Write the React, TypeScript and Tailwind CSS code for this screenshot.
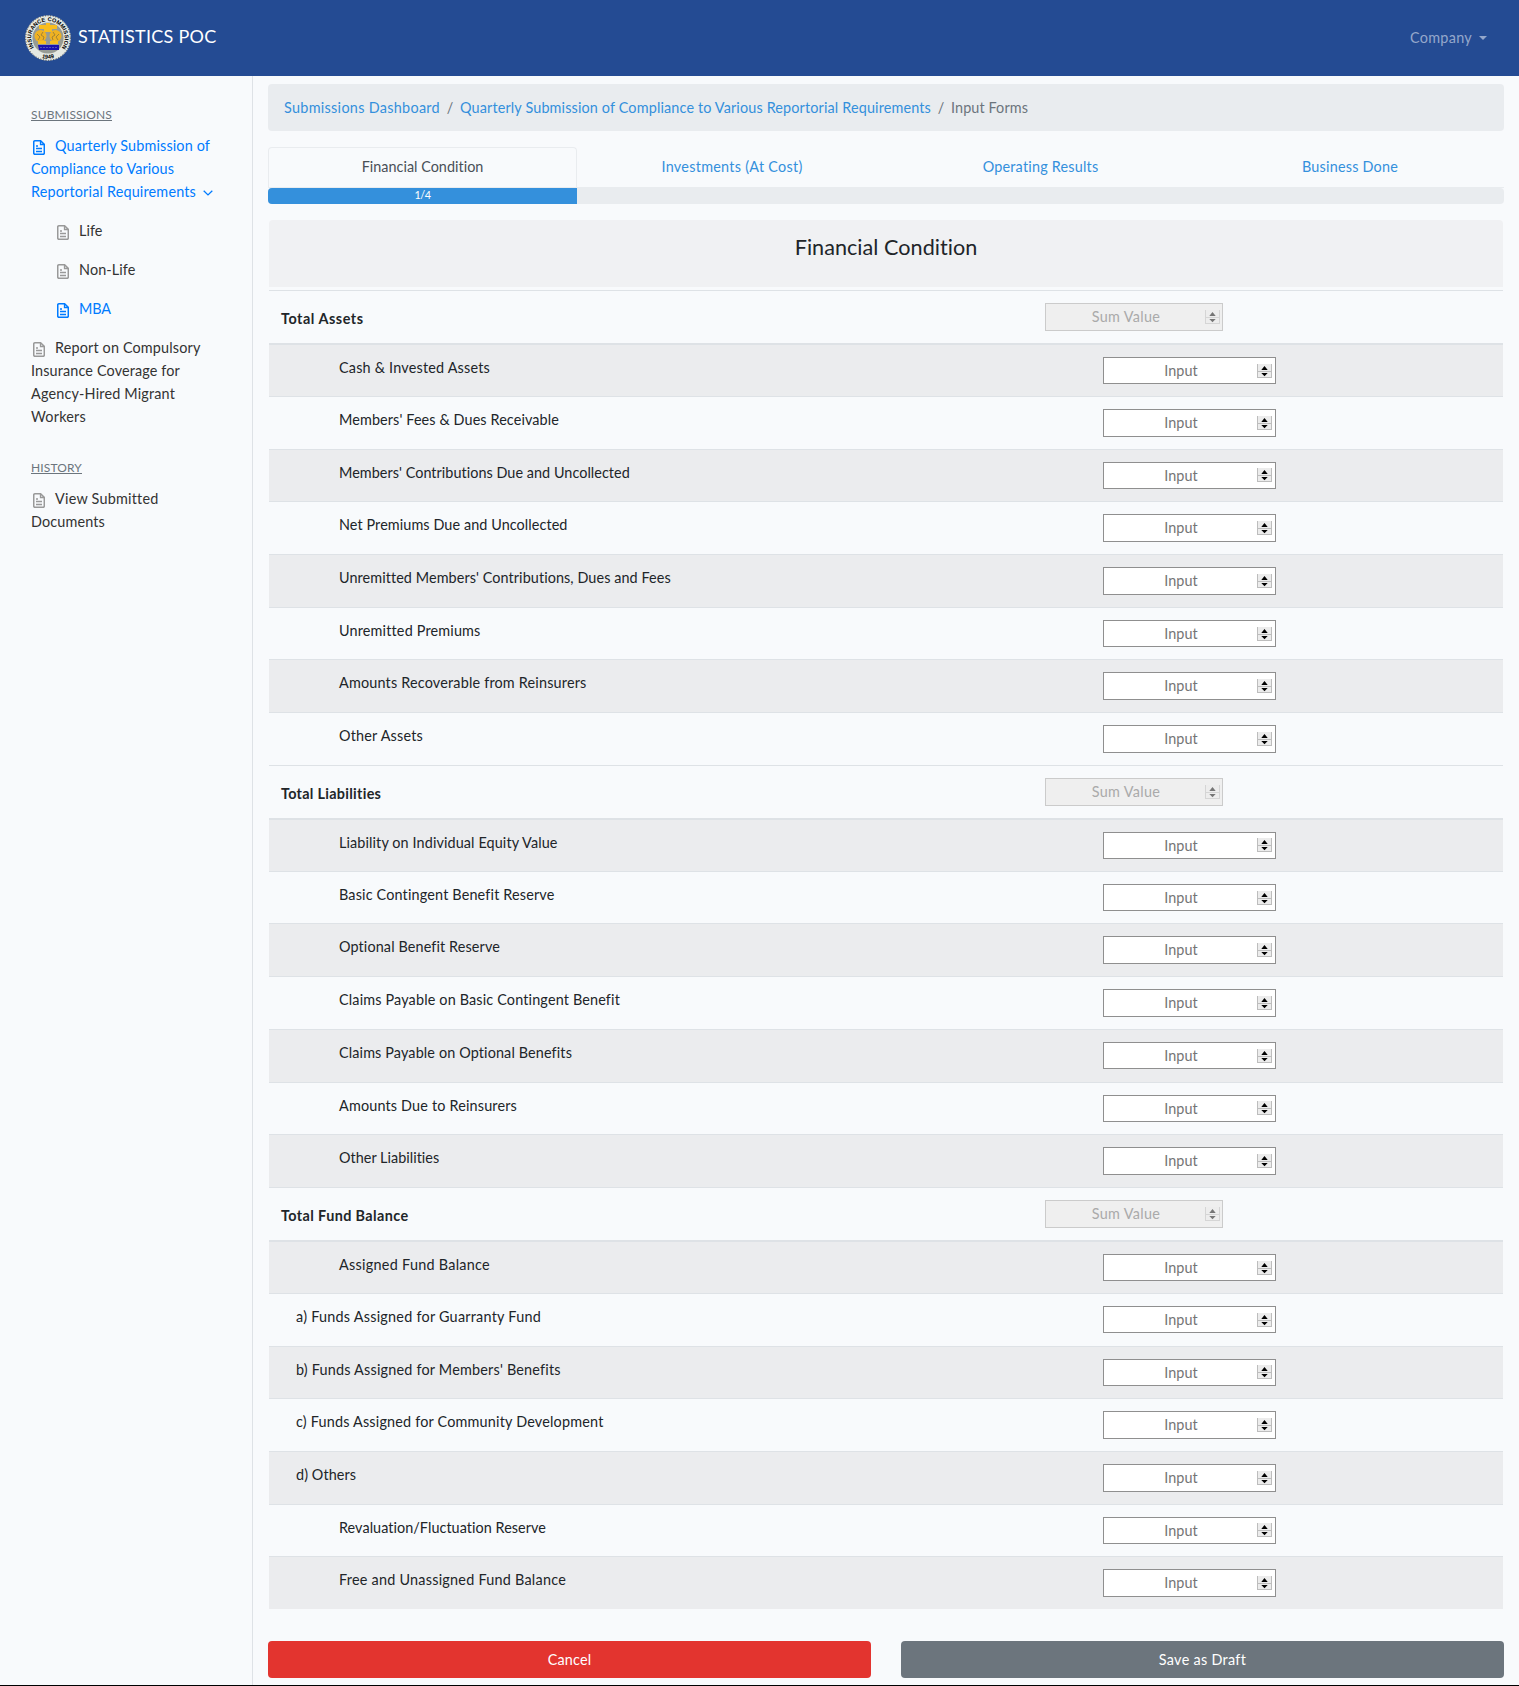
import React from "react";

type Row = { label: string; w: number; outdent?: boolean };
type Section = { title: string; w: number; rows: Row[] };

const sections: Section[] = [
  {
    title: "Total Assets",
    w: 82.5,
    rows: [
      { label: "Cash & Invested Assets", w: 151 },
      { label: "Members' Fees & Dues Receivable", w: 220 },
      { label: "Members' Contributions Due and Uncollected", w: 291 },
      { label: "Net Premiums Due and Uncollected", w: 228.5 },
      { label: "Unremitted Members' Contributions, Dues and Fees", w: 331.5 },
      { label: "Unremitted Premiums", w: 141 },
      { label: "Amounts Recoverable from Reinsurers", w: 247.5 },
      { label: "Other Assets", w: 84 },
    ],
  },
  {
    title: "Total Liabilities",
    w: 100.5,
    rows: [
      { label: "Liability on Individual Equity Value", w: 218.5 },
      { label: "Basic Contingent Benefit Reserve", w: 215.5 },
      { label: "Optional Benefit Reserve", w: 161 },
      { label: "Claims Payable on Basic Contingent Benefit", w: 281 },
      { label: "Claims Payable on Optional Benefits", w: 233 },
      { label: "Amounts Due to Reinsurers", w: 178 },
      { label: "Other Liabilities", w: 100.5 },
    ],
  },
  {
    title: "Total Fund Balance",
    w: 127.5,
    rows: [
      { label: "Assigned Fund Balance", w: 151 },
      { label: "a) Funds Assigned for Guarranty Fund", w: 245, outdent: true },
      { label: "b) Funds Assigned for Members' Benefits", w: 264.5, outdent: true },
      { label: "c) Funds Assigned for Community Development", w: 307.5, outdent: true },
      { label: "d) Others", w: 60, outdent: true },
      { label: "Revaluation/Fluctuation Reserve", w: 207.5 },
      { label: "Free and Unassigned Fund Balance", w: 227 },
    ],
  },
];

/** One line of text whose tracking is adjusted so that it spans `w` pixels. */
function Line({ children, w, className = "" }: { children: string; w: number; className?: string }) {
  const ref = React.useRef<HTMLSpanElement>(null);
  const [spacing, setSpacing] = React.useState(0);
  React.useLayoutEffect(() => {
    const el = ref.current;
    if (!el) return;
    el.style.letterSpacing = "0px";
    const natural = el.getBoundingClientRect().width;
    setSpacing((w - natural) / children.length);
    el.style.letterSpacing = `${(w - natural) / children.length}px`;
  }, [children, w]);
  return (
    <span ref={ref} className={`inline-block whitespace-nowrap ${className}`} style={{ letterSpacing: `${spacing}px` }}>
      {children}
    </span>
  );
}

function FileIcon({ className = "" }: { className?: string }) {
  return (
    <svg viewBox="0 0 12 15" className={`inline-block h-[15px] w-3 ${className}`} fill="none" stroke="currentColor">
      <path d="M2 .75h5.6L11.3 4.4V13a1.2 1.2 0 0 1-1.2 1.25H2A1.2 1.2 0 0 1 .75 13V2A1.2 1.2 0 0 1 2 .75Z" strokeWidth="1.5" />
      <path d="M7.5 1v3.5H11" strokeWidth="1.3" />
      <path d="M3 6h2M3 8.500h6M3 11.500h6" strokeWidth="1.3" />
    </svg>
  );
}

function Seal() {
  return (
    <svg viewBox="0 0 46 46" className="h-[46px] w-[46px]">
      <defs>
        <path id="rimTop" d="M9.700 33.300A16.800 16.800 0 1 1 36.300 33.300" />
        <path id="rimBottom" d="M10.500 39.600A20.800 20.800 0 0 0 35.500 39.600" />
      </defs>
      <circle cx="23" cy="23" r="22.8" fill="#e4e8e2" />
      <circle cx="23" cy="23" r="22.3" fill="none" stroke="#222" strokeWidth=".8" strokeDasharray="1 1.6" />
      <circle cx="23" cy="23" r="15.6" fill="#979b94" />
      <text fontSize="5.6" fontWeight="700" fill="#000" fontFamily="Liberation Sans, sans-serif">
        <textPath href="#rimTop" textLength="73" startOffset="1">INSURANCE COMMISSION</textPath>
      </text>
      <text fontSize="5.6" fontWeight="700" fill="#000" fontFamily="Liberation Sans, sans-serif">
        <textPath href="#rimBottom" startOffset="50%" textAnchor="middle">1949</textPath>
      </text>
      <path d="M14 10h7V8h4v2h7v4h-5v3h-8v-3h-5z" fill="#f9bd1d" />
      <circle cx="15.500" cy="21" r="6" fill="#efb222" />
      <circle cx="30.500" cy="21" r="6" fill="#efb222" />
      <path d="M13 26h8v3h-8zM25 26h8v3h-8z" fill="#f9bd1d" />
      <path d="M12 19l3 3-2 3M18 17l-2 3 3 2-1 3M34 19l-3 3 2 3M28 17l2 3-3 2 1 3" stroke="#9a7d35" strokeWidth=".9" fill="none" />
      <path d="M13 30h21v5H14z" fill="#1a12b0" />
      <path d="M15 32.500h17" stroke="#6a70b8" strokeWidth=".7" strokeDasharray="2 1" />
    </svg>
  );
}

function Spinner() {
  return (
    <svg viewBox="0 0 15 14" className="h-3.5 w-[15px]" shapeRendering="crispEdges">
      <path d="M0 0h15v14H0z" fill="#ececec" />
      <path d="M0 0h1v14H0zM14 0h1v14h-1zM0 13h15v1H0zM0 7h15v1H0z" fill="#bdbdbd" />
      <g shapeRendering="geometricPrecision" fill="#000">
        <path d="M7.500 2 10.700 6H4.300zM7.500 12.300 10.700 9H4.300z" />
      </g>
    </svg>
  );
}

function NumberBox({ sum }: { sum?: boolean }) {
  return sum ? (
    <div className="flex h-7 w-[178px] items-center border border-[#cbcbcb] bg-[#efefef] pr-0.5 text-[#aaaaaa]">
      <div className="flex-1 pl-px text-center"><Line w={68.5}>Sum Value</Line></div>
      <div className="flex opacity-50"><Spinner /></div>
    </div>
  ) : (
    <div className="flex h-[27.600px] w-[173px] items-center border border-[#8f8f8f] bg-white pr-[3px] text-[#757575]">
      <div className="flex-1 pl-px text-center"><Line w={33.5}>Input</Line></div>
      <Spinner />
    </div>
  );
}

function Sidebar() {
  return (
    <aside className="w-[253px] shrink-0 border-r border-[#dee2e6] pl-[31px] leading-[23px] text-[#333]">
      <h6 className="mt-[27px] text-[12px] text-[#6c757d]"><Line w={81} className="underline">SUBMISSIONS</Line></h6>
      <div className="mt-2 text-[#007bff]">
        <div className="flex items-center"><FileIcon className="mr-2.5 ml-0.5 mt-1" /><Line w={155}>Quarterly Submission of</Line></div>
        <div><Line w={143}>Compliance to Various</Line></div>
        <div className="flex items-center">
          <Line w={165}>Reportorial Requirements</Line>
          <svg viewBox="0 0 10 6" className="mt-0.5 ml-[7px] h-1.5 w-2.5" fill="none" stroke="currentColor" strokeWidth="1.3"><path d="M.7.7 5 4.900 9.300.7" /></svg>
        </div>
      </div>
      <div className="mt-4 ml-[26px] flex flex-col gap-4">
        <div className="flex items-center"><FileIcon className="mt-1 mr-2.5 text-[#999]" /><Line w={23.5}>Life</Line></div>
        <div className="flex items-center"><FileIcon className="mt-1 mr-2.5 text-[#999]" /><Line w={56.5}>Non-Life</Line></div>
        <div className="flex items-center text-[#007bff]"><FileIcon className="mt-1 mr-2.5" /><Line w={32}>MBA</Line></div>
      </div>
      <div className="mt-4">
        <div className="flex items-center"><FileIcon className="mt-1 mr-2.5 ml-0.5 text-[#999]" /><Line w={145.5}>Report on Compulsory</Line></div>
        <div><Line w={149}>Insurance Coverage for</Line></div>
        <div><Line w={144}>Agency-Hired Migrant</Line></div>
        <div><Line w={55}>Workers</Line></div>
      </div>
      <h6 className="mt-7 text-[12px] text-[#6c757d]"><Line w={51} className="underline">HISTORY</Line></h6>
      <div className="mt-2">
        <div className="flex items-center"><FileIcon className="mt-1 mr-2.5 ml-0.5 text-[#999]" /><Line w={103}>View Submitted</Line></div>
        <div><Line w={74}>Documents</Line></div>
      </div>
    </aside>
  );
}

export default function App() {
  return (
    <div className="flex h-[1686px] w-full flex-col overflow-hidden border-b border-black bg-[#f8fafc] font-['Lato','Open_Sans',sans-serif] text-[14.400px] text-[#212529]">
      <header className="flex h-[76px] shrink-0 items-center justify-between bg-[#244b93] pr-8 pl-[25px]">
        <div className="flex items-center">
          <Seal />
          <Line w={138.5} className="ml-[7px] pb-1 text-[18px] text-white">STATISTICS POC</Line>
        </div>
        <div className="flex items-center text-[#94a7cb]">
          <Line w={62}>Company</Line>
          <span className="ml-[7px] border-x-4 border-t-4 border-x-transparent border-t-[#94a7cb]" />
        </div>
      </header>
      <div className="flex min-h-0 flex-1">
        <Sidebar />
        <main className="flex-1 pt-2 pr-[15px] pl-[15px]">
          <nav className="flex h-[47px] items-center rounded bg-[#e9ecef] pl-4 text-[#6c757d]">
            <Line w={156} className="text-[#3490dc]">Submissions Dashboard</Line>
            <span className="w-5 text-center">/</span>
            <Line w={471} className="text-[#3490dc]">Quarterly Submission of Compliance to Various Reportorial Requirements</Line>
            <span className="w-5 text-center">/</span>
            <Line w={77}>Input Forms</Line>
          </nav>
          <div className="mt-4 grid h-[41px] grid-cols-4 border-b border-[#e9ecef] text-center leading-[38px] text-[#3490dc]">
            <div className="rounded-t border border-b-0 border-[#e9ecef] text-[#495057]"><Line w={122}>Financial Condition</Line></div>
            <div className="pt-px pl-px"><Line w={141}>Investments (At Cost)</Line></div>
            <div className="pt-px"><Line w={116}>Operating Results</Line></div>
            <div className="pt-px pl-px"><Line w={96}>Business Done</Line></div>
          </div>
          <div className="h-4 overflow-hidden rounded bg-[#e9ecef]">
            <div className="h-full w-1/4 bg-[#3490dc] text-center text-[10.800px] leading-[14px] text-white"><Line w={16}>1/4</Line></div>
          </div>
          <section className="mx-px mt-4">
            <h4 className="h-[66.500px] rounded-t bg-[#f0f1f3] pt-3 text-center text-[21.600px] leading-[30px]"><Line w={183}>Financial Condition</Line></h4>
            <div className="mt-[3.500px]">
              {sections.map((s) => (
                <div key={s.title}>
                  <div className="flex h-[53.300px] border-t border-[#dee2e6] pl-3">
                    <div className="w-[764px] pt-[17px] font-bold leading-[22px]">
                      <Line w={s.w}>{s.title}</Line>
                    </div>
                    <div className="pt-3"><NumberBox sum /></div>
                  </div>
                  {s.rows.map((r, i) => (
                    <div
                      key={r.label}
                      className={`flex h-[52.700px] border-[#dee2e6] ${i === 0 ? "border-t-2 pt-[11.500px]" : "border-t pt-3"} ${i % 2 === 0 ? "bg-[#ebecee]" : ""}`}
                    >
                      <div className={r.outdent ? "w-[834px] pl-[27px] leading-[22px]" : "w-[834px] pl-[70px] leading-[22px]"}>
                        <Line w={r.w}>{r.label}</Line>
                      </div>
                      <NumberBox />
                    </div>
                  ))}
                </div>
              ))}
            </div>
          </section>
          <div className="mt-8 grid grid-cols-2 gap-[30px] text-center leading-[37px] text-white">
            <div className="h-[37px] rounded bg-[#e3342f]"><Line w={43.5}>Cancel</Line></div>
            <div className="h-[37px] rounded bg-[#6c757d]"><Line w={87}>Save as Draft</Line></div>
          </div>
        </main>
      </div>
    </div>
  );
}
